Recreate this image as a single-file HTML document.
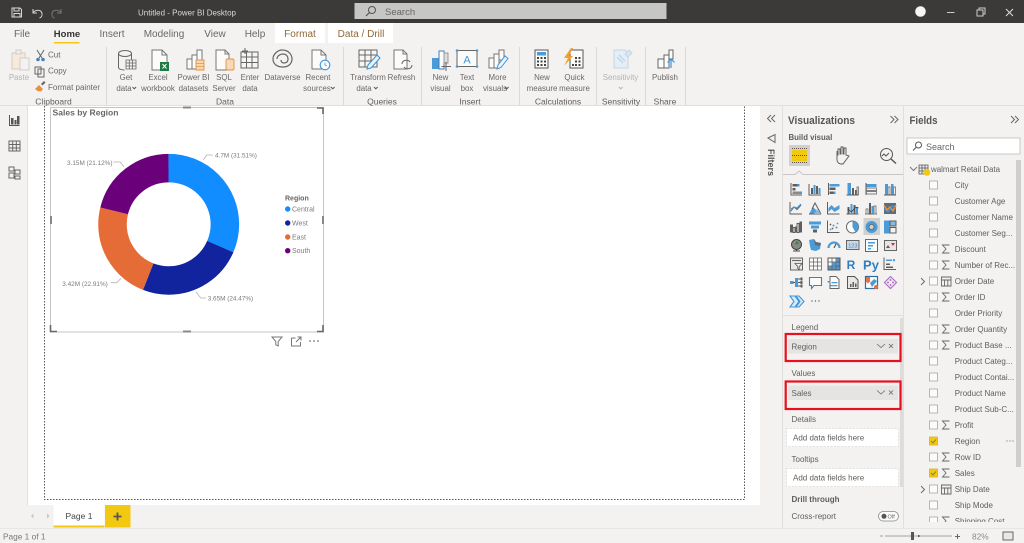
<!DOCTYPE html>
<html><head><meta charset="utf-8"><title>Power BI Desktop</title>
<style>
html,body{margin:0;padding:0;background:#f3f2f1;width:1024px;height:543px;overflow:hidden}
svg{display:block;font-family:"Liberation Sans",sans-serif}
svg.root{filter:blur(.35px)}
text{fill:#605e5c;font-size:8.5px}
.rb text,text.rb{text-anchor:middle;font-size:7.9px;fill:#6a6866}
.gl{text-anchor:middle;font-size:7px;fill:#7a7876}
.tab{text-anchor:middle;font-size:10px;fill:#6a6866}
.f{font-size:8px;fill:#605e5c}
.l{font-size:6.4px;fill:#7d7b79}
.s{fill:none;stroke:#605e5c;stroke-width:1}
.s2{fill:none;stroke:#7f7d7b;stroke-width:.9}
.b{fill:#4a9bd8}
.g{fill:#605e5c}
.cb{fill:#fbfbfa;stroke:#a8a6a4;stroke-width:.8}
.bs{fill:none;stroke:#3f96d8;stroke-width:1.2}
.o{fill:#f6d9b8;stroke:#e8903c;stroke-width:.9}
</style></head><body>
<svg class="root" width="1024" height="543" viewBox="0 0 1024 543" xmlns="http://www.w3.org/2000/svg">
<rect width="1024" height="543" fill="#f3f2f1"/>
<!-- title bar -->
<rect width="1024" height="23" fill="#3b3a39"/>
<g fill="none" stroke="#d8d8d6" stroke-width="1">
<path d="M12 8h8l1.500 1.500v7.500h-9.500z"/><path d="M14 8v3h5V8M14 17v-3.500h6V17"/>
</g>
<path d="M33 9v4h4M33 13c2-3.500 8-4 9 .5 .5 2.500-1 4-2.500 4.500" fill="none" stroke="#d8d8d6"/>
<path d="M61 9v4h-4M61 13c-2-3.500-8-4-9 .5-.5 2.500 1 4 2.500 4.500" fill="none" stroke="#7a7977"/>
<text x="187" y="15.500" text-anchor="middle" style="fill:#d9d9d7;font-size:8.500px" textLength="98" lengthAdjust="spacingAndGlyphs">Untitled - Power BI Desktop</text>
<rect x="354.500" y="3" width="312" height="16" fill="#c6c6c4"/>
<circle cx="372" cy="10" r="3.500" fill="none" stroke="#555" stroke-width="1"/><path d="M369.500 12.500l-3.500 3.500" stroke="#555" stroke-width="1.200"/>
<text x="385" y="15" style="font-size:9.500px;fill:#676664">Search</text>
<circle cx="920.500" cy="11.500" r="5.300" fill="#f5f5f5"/>
<path d="M947 12.500h7.500" stroke="#ccc" stroke-width="1"/>
<path d="M977 10h6v6h-6zM979 10V8h6v6h-2" fill="none" stroke="#ccc" stroke-width="1"/>
<path d="M1006 9l7 7M1013 9l-7 7" stroke="#ddd" stroke-width="1"/>
<!-- tabs -->
<rect x="275" y="23" width="50" height="20" fill="#fff"/>
<rect x="328" y="23" width="65" height="20" fill="#fff"/>
<text class="tab" x="22" y="37">File</text>
<text class="tab" x="67" y="37" style="fill:#333;font-weight:bold;font-size:9.500px">Home</text>
<rect x="54" y="42" width="25.500" height="1.500" fill="#f2c811"/>
<text class="tab" x="112" y="37">Insert</text>
<text class="tab" x="164" y="37">Modeling</text>
<text class="tab" x="215" y="37">View</text>
<text class="tab" x="255" y="37">Help</text>
<text class="tab" x="300" y="37" style="fill:#8f6a38">Format</text>
<text class="tab" x="361" y="37" style="fill:#8f6a38">Data / Drill</text>
<!-- ribbon separators -->
<g stroke="#dcdad8"><path d="M106.500 47v58M343.500 47v58M421.500 47v58M519.500 47v58M596.500 47v58M645.500 47v58M685.500 47v58"/></g>
<rect x="0" y="105" width="1024" height="1" fill="#e1dfdd"/>
<!-- ribbon labels -->
<g class="rb">
<text x="19" y="80" style="fill:#b5b3b1">Paste</text>
<text x="126" y="80">Get</text><text x="124" y="91">data</text>
<text x="158" y="80">Excel</text><text x="158" y="91">workbook</text>
<text x="193.500" y="80">Power BI</text><text x="193.500" y="91">datasets</text>
<text x="224" y="80">SQL</text><text x="224" y="91">Server</text>
<text x="250" y="80">Enter</text><text x="250" y="91">data</text>
<text x="282.500" y="80">Dataverse</text>
<text x="318" y="80">Recent</text><text x="317" y="91">sources</text>
<text x="368" y="80">Transform</text><text x="364" y="91">data</text>
<text x="401.500" y="80">Refresh</text>
<text x="440.500" y="80">New</text><text x="440.500" y="91">visual</text>
<text x="467" y="80">Text</text><text x="467" y="91">box</text>
<text x="497.500" y="80">More</text><text x="495" y="91">visuals</text>
<text x="542" y="80">New</text><text x="542" y="91">measure</text>
<text x="574.500" y="80">Quick</text><text x="574.500" y="91">measure</text>
<text x="620.500" y="80" style="fill:#b5b3b1">Sensitivity</text>
<text x="665" y="80">Publish</text>
</g>
<path d="M132.500 87l1.800 1.800 1.800-1.800M331 87l1.800 1.800 1.800-1.800M374 87l1.800 1.800 1.800-1.800M505 87l1.800 1.800 1.800-1.800" fill="none" stroke="#555"/>
<path d="M619 87l1.800 1.800 1.800-1.800" fill="none" stroke="#b5b3b1"/>
<text x="48" y="57.500" style="font-size:8px;fill:#6a6866">Cut</text>
<text x="48" y="73.500" style="font-size:8px;fill:#6a6866">Copy</text>
<text x="48" y="90" style="font-size:8px;fill:#6a6866" textLength="52" lengthAdjust="spacingAndGlyphs">Format painter</text>
<g class="gl"><text x="53.500" y="104.500">Clipboard</text><text x="225" y="104.500">Data</text><text x="382" y="104.500">Queries</text><text x="470" y="104.500">Insert</text><text x="558" y="104.500">Calculations</text><text x="621" y="104.500">Sensitivity</text><text x="665" y="104.500">Share</text></g>
<!-- clipboard icons -->
<path d="M12 53h13v16H12z" fill="#f7ead9" stroke="#cfcdcb"/><path d="M16 50h5v4h-5z" fill="#eee" stroke="#cfcdcb"/><path d="M20 58h9v12h-9z" fill="#f3f2f1" stroke="#cfcdcb"/>
<path d="M37 50l5 8M44 50l-5 8" stroke="#666" fill="none"/><circle cx="38" cy="59.500" r="1.800" fill="#4a7fc0"/><circle cx="43" cy="59.500" r="1.800" fill="#4a7fc0"/>
<path d="M35 67h6v7h-6zM38 69h6v8h-6z" fill="#f3f2f1" stroke="#666"/>
<path d="M35 89l4-4 4 4-2 2.500-3.500-.5z" fill="#e8903c"/><path d="M41 84l3-3 1.500 1.500-3 3z" fill="#666"/>
<!-- data icons -->
<ellipse cx="125" cy="53.500" rx="6.500" ry="3" fill="#f3f2f1" stroke="#666"/><path d="M118.500 53.500v14c0 1.500 3 2.500 6 2.500M131.500 53.500v6" fill="none" stroke="#666"/>
<path d="M126 60h10v9h-10zM126 63h10M126 66h10M129.300 60v9M132.600 60v9" fill="#f3f2f1" stroke="#666" stroke-width=".8"/>
<path d="M152 50h10l5 5v15h-15z" fill="#fbfbfa" stroke="#777"/><path d="M162 50v5h5" fill="none" stroke="#777"/><rect x="160" y="62" width="9" height="9" fill="#1f7a44"/><path d="M162.500 64l4 4.500M166.500 64l-4 4.500" stroke="#fff"/>
<path d="M187 59h5v10h-5zM192 55h5v14h-5zM197 50h5v10h-5z" fill="#fbfbfa" stroke="#777"/>
<path d="M196 60h8v10h-8z" class="o"/><path d="M196 63.500h8M196 66.500h8" stroke="#e8903c" fill="none" stroke-width=".8"/>
<path d="M216 50h9l4 4v16h-13z" fill="#fbfbfa" stroke="#777"/><path d="M225 50v4h4" fill="none" stroke="#777"/><rect x="226" y="59" width="8" height="11" rx="1.500" class="o"/>
<path d="M241 52h17v16h-17zM241 57h17M241 62.500h17M246.500 52v16M252 52v16" fill="#f5f5f4" stroke="#666"/><path d="M245 48v6M242 51h6" stroke="#666"/>
<path d="M282 50c7 0 10 5 10 9 0 5-4 8-9 8-6 0-10-3-10-8 0-5 5-9 9-9zM277 59c0-3 3-5 6-5 3 0 5 2 5 5 0 3-2 4-4 4-2 0-3-1.500-3-3" fill="none" stroke="#666" stroke-width="1.200"/>
<path d="M312 50h9l5 5v14h-14z" fill="#fbfbfa" stroke="#777"/><path d="M321 50v5h5" fill="none" stroke="#777"/><circle cx="325" cy="65" r="4.800" fill="#fff" stroke="#3f96d8" stroke-width="1.100"/><path d="M325 62.500V65l2 1" fill="none" stroke="#3f96d8" stroke-width=".8"/>
<!-- queries -->
<path d="M359 50h18v17h-18zM359 55h18M359 61h18M365 50v17M371 50v17" fill="#f5f5f4" stroke="#666"/>
<path d="M367 69l1-4 9-10 3 3-9 10z" fill="#e8f2fb" stroke="#3f96d8" stroke-width="1.100"/>
<path d="M394 50h9l4 4v15h-13z" fill="#fbfbfa" stroke="#777"/><path d="M403 50v4h4" fill="none" stroke="#777"/>
<path d="M402 64c0-4 6-5 8-2M412 65c0 4-6 5-8 2" fill="none" stroke="#666"/>
<!-- insert -->
<path d="M432 58h7v11h-7z" fill="#4a9bd8"/><path d="M439 51h5v18h-5z" fill="#fbfbfa" stroke="#3f7fb8"/><path d="M444 53h4v10h-4z" fill="#ddd" stroke="#999"/><path d="M446 62v9M441.500 66.500h9.500" stroke="#666"/>
<path d="M457 50.500h20v16h-20z" fill="#fbfbfa" stroke="#666"/><circle cx="457" cy="50.500" r="1.300" class="b"/><circle cx="477" cy="50.500" r="1.300" class="b"/><circle cx="457" cy="66.500" r="1.300" class="b"/><circle cx="477" cy="66.500" r="1.300" class="b"/>
<text x="467" y="63.500" text-anchor="middle" style="font-size:11px;fill:#3f96d8">A</text>
<path d="M489 58h5v10h-5zM494 54h5v14h-5zM499 50h5v10h-5z" fill="#fbfbfa" stroke="#777"/><path d="M497 69l1-4 7-9 3 2.500-7 9z" fill="#e8f2fb" stroke="#3f96d8"/>
<!-- calc -->
<path d="M535 50h13v18h-13z" fill="#fbfbfa" stroke="#555"/><rect x="537" y="52" width="9" height="3.500" fill="#4a9bd8"/>
<g fill="#444"><rect x="537" y="57" width="2" height="2"/><rect x="540.500" y="57" width="2" height="2"/><rect x="544" y="57" width="2" height="2"/><rect x="537" y="60.500" width="2" height="2"/><rect x="540.500" y="60.500" width="2" height="2"/><rect x="544" y="60.500" width="2" height="2"/><rect x="537" y="64" width="2" height="2"/><rect x="540.500" y="64" width="2" height="2"/><rect x="544" y="64" width="2" height="2"/></g>
<path d="M570 50h13v18h-13z" fill="#fbfbfa" stroke="#555"/>
<g fill="#444"><rect x="575" y="57" width="2" height="2"/><rect x="578.500" y="57" width="2" height="2"/><rect x="575" y="60.500" width="2" height="2"/><rect x="578.500" y="60.500" width="2" height="2"/><rect x="572" y="64" width="2" height="2"/><rect x="575" y="64" width="2" height="2"/><rect x="578.500" y="64" width="2" height="2"/></g>
<path d="M571 48l-7 10h4l-4 8 9-10h-4l4-8z" fill="#f0a030"/>
<!-- sensitivity -->
<path d="M614 50h11l3 3v15h-14z" fill="#e4eef6" stroke="#c3d6e6"/><path d="M617 57l6 6M619 55l6 6" stroke="#b8cfe2"/><path d="M625 54l4-4 3 3-4 4z" fill="#d9e6f0" stroke="#c3d6e6"/>
<!-- publish -->
<path d="M658 59h6v9h-6zM664 55h5v13h-5zM669 50h4v9h-4z" fill="#fbfbfa" stroke="#666"/><path d="M671 68v-9M667.500 62.500l3.500-3.500 3.500 3.500" fill="none" stroke="#3f96d8" stroke-width="1.200"/>
<!-- canvas -->
<rect x="27" y="106" width="733" height="399" fill="#fff"/>
<rect x="27" y="106" width="1" height="399" fill="#e1dfdd"/>
<path d="M44.500 106V499.500H744.500V106" fill="none" stroke="#555" stroke-width="1" stroke-dasharray="1.500 1.500"/>
<!-- left rail icons -->
<path d="M9.500 115v10.500h10" fill="none" stroke="#555"/><path d="M11 118h2.500v6.500H11zM14.500 120h2v4.500h-2zM17 116h2.500v8.500H17z" fill="#555"/>
<path d="M9 141h11v10H9zM9 144.500h11M9 148h11M12.700 141v10M16.300 141v10" fill="none" stroke="#666"/>
<path d="M9 167h5v4H9zM15 170h5v4h-5zM15 176h5v3h-5zM9 173h5v5H9z" fill="none" stroke="#666"/>
<!-- visual -->
<rect x="50.500" y="107.500" width="273" height="224.500" fill="#fff" stroke="#b8b6b4" stroke-width=".8"/>
<text x="52.500" y="115.500" style="font-size:8.500px;font-weight:bold;fill:#666" textLength="66" lengthAdjust="spacingAndGlyphs">Sales by Region</text>
<g fill="none" stroke-width="28.500" transform="rotate(-90 168.700 224.300)">
<circle cx="168.700" cy="224.300" r="56.200" stroke="#118dff" pathLength="100" stroke-dasharray="31.510 68.490"/>
<circle cx="168.700" cy="224.300" r="56.200" stroke="#12239e" pathLength="100" stroke-dasharray="24.470 75.530" stroke-dashoffset="-31.510"/>
<circle cx="168.700" cy="224.300" r="56.200" stroke="#e66c37" pathLength="100" stroke-dasharray="22.910 77.090" stroke-dashoffset="-55.980"/>
<circle cx="168.700" cy="224.300" r="56.200" stroke="#6b007b" pathLength="100" stroke-dasharray="21.110 78.890" stroke-dashoffset="-78.890"/>
</g>
<g fill="none" stroke="#b5b3b1" stroke-width=".8"><path d="M203.300 160l3.400-5h6M113.300 162h6.700l4 4.700M110.700 282.700h6l4.300-4.400M196 291.700l4.700 6.300h5.300"/></g>
<text class="l" x="215" y="157.500">4.7M (31.51%)</text>
<text class="l" x="67" y="165">3.15M (21.12%)</text>
<text class="l" x="62.300" y="286">3.42M (22.91%)</text>
<text class="l" x="207.700" y="300.500">3.65M (24.47%)</text>
<text x="285" y="200.500" style="font-size:7px;font-weight:bold;fill:#666">Region</text>
<circle cx="287.700" cy="209" r="2.700" fill="#118dff"/><text class="l" x="292" y="211.500" style="font-size:7px">Central</text>
<circle cx="287.700" cy="223" r="2.700" fill="#12239e"/><text class="l" x="292" y="225.500" style="font-size:7px">West</text>
<circle cx="287.700" cy="237" r="2.700" fill="#e66c37"/><text class="l" x="292" y="239.500" style="font-size:7px">East</text>
<circle cx="287.700" cy="250.700" r="2.700" fill="#6b007b"/><text class="l" x="292" y="253.200" style="font-size:7px">South</text>
<!-- handles -->
<g fill="none" stroke="#6a6866" stroke-width="1.600"><path d="M317 108h6v6M50.500 325v6.500h6.500M323 325v6.500h-6"/></g>
<g fill="#8a8886"><rect x="183" y="106.500" width="8" height="2"/><rect x="183" y="330.500" width="8" height="2"/><rect x="50" y="216" width="2" height="8"/><rect x="322" y="216" width="2" height="8"/></g>
<path d="M272 337h10l-3.800 4.500v4.500l-2.400-1.200v-3.300z" fill="none" stroke="#777"/>
<path d="M291.500 338h4M291.500 338v8h9v-4M296 342l5-5M297.500 337h3.500v3.500" fill="none" stroke="#777"/>
<g fill="#777"><circle cx="310" cy="341" r=".9"/><circle cx="314" cy="341" r=".9"/><circle cx="318" cy="341" r=".9"/></g>
<!-- page tabs -->
<path d="M33.500 513.500v5l-2.500-2.500zM47 513.500v5l2.500-2.500z" fill="#c8c6c4"/>
<rect x="53.500" y="505" width="51" height="22" fill="#fff"/><rect x="53.500" y="525.500" width="51" height="2" fill="#f2c811"/>
<text x="79" y="519" text-anchor="middle" style="font-size:8.500px;fill:#444">Page 1</text>
<rect x="105" y="505" width="25.500" height="22.500" fill="#f2c811"/>
<path d="M117.500 512.500v8M113.500 516.500h8" stroke="#555" stroke-width="1.800"/>
<rect x="0" y="528" width="1024" height="1" fill="#e8e6e4"/>
<text x="3" y="539.500" style="font-size:8.300px;fill:#7a7876">Page 1 of 1</text>
<!-- zoom -->
<path d="M880 536h3M885 536h67" stroke="#8a8886" stroke-width=".8"/><rect x="911" y="532" width="3" height="8" fill="#555"/><rect x="918" y="535" width="1.500" height="2" fill="#555"/>
<path d="M955 536.500h5M957.500 534v5" stroke="#666"/>
<text x="972" y="539.500" style="font-size:8.300px;fill:#8a8886">82%</text>
<rect x="1003" y="532" width="10" height="8" fill="#e8e8e8" stroke="#666"/>
<!-- filters panel -->
<rect x="760" y="106" width="22" height="422" fill="#f3f2f1"/>
<rect x="782" y="106" width="1" height="422" fill="#e1dfdd"/>
<path d="M771 115l-3.500 3.500 3.500 3.500M775 115l-3.500 3.500 3.500 3.500" fill="none" stroke="#666"/>
<path d="M768 138l7-3.500v8z M775 136.500v3" fill="none" stroke="#666"/>
<text transform="translate(768 149) rotate(90)" style="font-size:9px;font-weight:bold;fill:#555">Filters</text>
<!-- viz panel -->
<text x="788" y="124" style="font-size:11px;font-weight:bold;fill:#555" textLength="67" lengthAdjust="spacingAndGlyphs">Visualizations</text>
<path d="M890.500 116l3.500 3.500-3.500 3.500M894.500 116l3.500 3.500-3.500 3.500" fill="none" stroke="#666"/>
<text x="788.500" y="140" style="font-size:7.800px;font-weight:bold;fill:#605e5c">Build visual</text>
<rect x="789" y="145" width="21" height="21" fill="#d2d0ce"/>
<rect x="792" y="150" width="15" height="11" fill="#f2c811"/><path d="M792 148.500h15M792 155.500h15M792 162.500h15" stroke="#555" stroke-dasharray="1 1"/>
<path d="M837 151v9c0 2 2 4 4 4h2l6-8-3-1v-7h-2v6h-1v-7h-2v7h-1v-5h-2v6h-1z" fill="#f3f2f1" stroke="#555" stroke-width=".9"/>
<circle cx="886.500" cy="154.500" r="6" fill="none" stroke="#555"/><path d="M891 159l5 4.500" stroke="#555" stroke-width="1.500"/><path d="M882 156l2-2 2 2 3-3" fill="none" stroke="#555"/>
<path d="M783 174.500h12l4-3.500 4 3.500h100" fill="none" stroke="#c8c6c4"/>
<rect x="863.500" y="218" width="16.500" height="17" fill="#d2d0ce"/>
<!-- viz icons -->
<g transform="translate(790 183)"><path class="s" d="M1 0v12h11"/><path class="g" d="M2.500 1h5v2.500h-5z"/><path class="b" d="M7.500 1h2v2.500h-2z"/><path class="g" d="M2.500 5h3v2.500h-3z"/><path class="g" d="M2.500 8.500h7V11h-7z" opacity=".7"/><path class="b" d="M9.500 8.500h2.500V11h-2.500z"/></g>
<g transform="translate(809 183)"><path class="s" d="M0 1v11h12"/><path class="g" d="M2 5h2v6H2zM7 3h2v8H7z"/><path class="b" d="M4.500 2h2v9h-2zM9.500 5h2v6h-2z"/></g>
<g transform="translate(827.500 183)"><path class="s" d="M1 0v12"/><path class="b" d="M2 1h10v2.500H2z"/><path class="g" d="M2 4.500h6V7H2z"/><path class="g" d="M2 8.500h4V11H2z"/><path class="b" d="M6 8.500h2V11H6z"/></g>
<g transform="translate(846.500 183)"><path class="s" d="M0 12h12"/><path class="b" d="M1 0h3.500v11.500H1z"/><path class="g" d="M5.500 5h2v6.500h-2zM8.500 7h1.500v4.500H8.500z"/><path class="s2" d="M10.500 4h1.500v7.500h-1.500z"/></g>
<g transform="translate(865 183)"><path class="s" d="M1 0v12"/><path class="b" d="M1.500 1h10v3h-10z"/><path class="s2" d="M1.500 5h10v2.500h-10zM1.500 8.500h10V11h-10z"/></g>
<g transform="translate(884 183)"><path class="s" d="M0 12h12"/><path class="b" d="M1 1h3v10.500H1zM7 1h2.500v10.500H7z"/><path class="s2" d="M4 4h2v7.500H4zM9.500 4h2v7.500h-2z"/></g>
<g transform="translate(790 202)"><path class="s" d="M0 0v12h12"/><path class="s" d="M1 9l3-4 3 2.500 4-4.500"/><path class="bs" d="M1 7l3-2 3 1 4-4" stroke-width=".9"/></g>
<g transform="translate(809 202)"><path class="b" d="M0 12l4-7 3 3 1 4z"/><path class="s" d="M0 12h12M3 7l3-6 6 11"/><path d="M5 12l3-5 4 5z" fill="#7fbbe5"/></g>
<g transform="translate(827.500 202)"><path class="b" d="M1 6l3-3 3 3 5-3v4l-5 3-3-3-3 3z"/><path class="s" d="M0 0v12h12"/></g>
<g transform="translate(846.500 202)"><path class="s" d="M0 12h12"/><path class="g" d="M1 5h2v7H1zM7 3h2v9H7z"/><path class="b" d="M4 2h2v10H4zM9.500 5h2v7h-2z"/><path d="M1 7l4 3 4-5 3 1" stroke="#333" fill="none" stroke-width=".7"/></g>
<g transform="translate(865 202)"><path class="s" d="M0 12h12"/><path class="s2" d="M1 7h2v5H1zM9 4h2v8H9z"/><path class="g" d="M4 1h2v11H4z"/><path class="b" d="M6.500 4h2v8h-2z"/></g>
<g transform="translate(884 202)"><path d="M0 1h12v11H0z" fill="#5d6c7a"/><path d="M0 3l3 5 3-3 3 4 3-6" fill="none" stroke="#e8903c" stroke-width="1.500"/><path d="M0 7l4 3 4-6 4 2" fill="none" stroke="#4a9bd8"/></g>
<g transform="translate(790 220.500)"><path class="g" d="M0 4h3v8H0zM5 6h2v6H5z"/><path class="s" d="M3 7h2v5H3zM7 3h2v9H7z"/><path class="g" d="M9.500 1h2.500v11H9.500z"/></g>
<g transform="translate(809 220.500)"><path class="b" d="M0 1h12v3H0zM2 5h8v3H2z"/><path class="g" d="M4 9h4v3H4z"/></g>
<g transform="translate(827.500 220.500)"><path class="s" d="M0 0v12h12"/><g class="g"><circle cx="3" cy="4" r=".9"/><circle cx="5" cy="8" r=".9"/></g><g class="b"><circle cx="6" cy="5" r="1"/><circle cx="9" cy="7" r="1"/><circle cx="10" cy="3" r=".9"/><circle cx="3" cy="9" r=".9"/></g></g>
<g transform="translate(846 220.500)"><circle cx="6.500" cy="6.500" r="6" fill="#fbfbfa" stroke="#666"/><path class="b" d="M6.500 .5a6 6 0 0 1 3 11.200l-3-5.200z"/></g>
<g transform="translate(865 220.500)"><circle cx="6.500" cy="6.500" r="4.500" fill="none" stroke="#4a9bd8" stroke-width="3"/><circle cx="6.500" cy="6.500" r="2.600" fill="#d2d0ce" stroke="#555" stroke-width=".8"/></g>
<g transform="translate(884 220.500)"><path class="b" d="M0 0h5.500v13H0z"/><path class="s" d="M6 .5h6v5H6zM6 7h6v5.500H6z"/><path d="M6.500 1h5v4h-5z" fill="#7fbbe5"/></g>
<g transform="translate(790 239)"><circle cx="6.500" cy="5.500" r="5" fill="#8a8886" stroke="#444"/><circle cx="7" cy="4" r="1.500" fill="#2f8a4a"/><path d="M3 12h7M6.500 10v2" stroke="#444"/></g>
<g transform="translate(809 239)"><path class="b" d="M0 1l5-1 2 3 5 1-1 6-4 2-5-1-1-4z"/><path class="g" d="M5 0l2 3 5 1-1 3-5-1z" opacity=".75"/></g>
<g transform="translate(827.500 239)"><path d="M1 9a5.500 5.500 0 0 1 11 0" fill="none" stroke="#4a9bd8" stroke-width="2.200"/><path d="M6.500 9l2-4" stroke="#444"/></g>
<g transform="translate(846 239)"><rect x=".5" y="1.500" width="12.500" height="9" fill="#c8d9e8" stroke="#666"/><text x="6.800" y="8.500" text-anchor="middle" style="font-size:5.500px;fill:#4a7fb0">123</text></g>
<g transform="translate(865 239)"><rect x=".5" y=".5" width="12" height="12" fill="#fbfbfa" stroke="#666"/><path class="b" d="M3 3h7v1.500H3zM3 6h5v1.500H3zM3 9h3v1.500H3z"/></g>
<g transform="translate(884 239)"><rect x=".5" y="1.500" width="12" height="10" fill="#e8e6e4" stroke="#666"/><path d="M7 4h4l-2 3z" fill="#c8323c"/><path class="g" d="M2 9l2-3 2 3z"/></g>
<g transform="translate(790 257.500)"><rect x=".5" y=".5" width="12" height="12" fill="#e8e6e4" stroke="#666"/><path d="M2 3h9" stroke="#666"/><path d="M5 6h7l-2.800 3v3l-1.400-.8V9z" fill="#f3f2f1" stroke="#555" stroke-width=".8"/></g>
<g transform="translate(809 257.500)"><path d="M.5 .5h12v12H.5zM.5 4.500h12M.5 8.500h12M4.500 .5v12M8.500 .5v12" fill="#fbfbfa" stroke="#666" stroke-width=".8"/></g>
<g transform="translate(827.500 257.500)"><path d="M.5 .5h12v12H.5z" fill="#fbfbfa" stroke="#555"/><path class="b" d="M5 5h3.500v3H5zM9 1h3v11H9zM1 9h8v3H1z"/><path d="M.5 4.500h12M.5 8.500h12M4.500 .5v12M8.500 .5v12" stroke="#555" stroke-width=".7"/></g>
<text x="851" y="269" text-anchor="middle" style="font-size:12px;font-weight:bold;fill:#2f7ec2">R</text>
<text x="871" y="269.500" text-anchor="middle" style="font-size:13px;font-weight:bold;fill:#2f7ec2">Py</text>
<g transform="translate(884 257.500)"><path class="s" d="M0 0v12h12"/><path class="b" d="M2 2h6v1.500H2z"/><circle cx="10" cy="2.700" r="1.200" class="b"/><path class="g" d="M2 6h4v1.500H2zM2 9h7v1.500H2z"/></g>
<g transform="translate(790 276)"><path class="b" d="M0 5h3.500v3H0zM5 2h3v9H5z"/><path d="M3 6.500h2M8 3h3M8 6.500h3M8 10h3" stroke="#555"/><path class="g" d="M10.500 1.500h2v3h-2zM10.500 5h2v3h-2zM10.500 8.500h2v3h-2z"/></g>
<g transform="translate(809 276)"><path d="M.5 1.500h12v8H5l-2.500 3v-3h-2z" fill="#fbfbfa" stroke="#3f80b8" stroke-width="1.100"/></g>
<g transform="translate(827.500 276)"><path d="M2.500 .5h6l3 3v9h-9z" fill="#fbfbfa" stroke="#666"/><path class="b" d="M0 5h3v1.500H0zM4 6h6v1.200H4zM3 9h7v1.200H3z"/></g>
<g transform="translate(846.500 276)"><path d="M1 .5h7l3.500 3.500v8.500H1z" fill="#e8e6e4" stroke="#555"/><path class="g" d="M3.500 8h1.500v3H3.500zM6 6h1.500v5H6zM8.500 7.500h1.500V11H8.500z"/></g>
<g transform="translate(865 276)"><rect x=".5" y=".5" width="12" height="12" fill="#fbfbfa" stroke="#2f6ea5" stroke-width="1.200"/><path d="M1 1h4v4.500l-2 2-2-2z" fill="#e8703c"/><path class="b" d="M5 7l4-4 3 2-5 6z"/><circle cx="11" cy="11" r="2" fill="#e8703c"/></g>
<g transform="translate(884 276)"><path d="M6.500 .5l6 6-6 6-6-6z" fill="#f3edf5" stroke="#b070c0" stroke-width="1.200"/><circle cx="6.500" cy="4" r="1" fill="#b070c0"/><circle cx="4" cy="6.500" r="1" fill="#b070c0"/><circle cx="9" cy="6.500" r="1" fill="#b070c0"/><circle cx="6.500" cy="9" r="1" fill="#b070c0"/></g>
<path d="M790 296h5l4 5.500-4 5.500h-5l4-5.500zM796 296h3l5 5.500-5 5.500h-3l4-5.500z" fill="#d9ebf8" stroke="#3f96d8" stroke-width="1.100"/>
<g fill="#666"><circle cx="812" cy="301" r=".7"/><circle cx="815.500" cy="301" r=".7"/><circle cx="819" cy="301" r=".7"/></g>
<!-- viz wells -->
<rect x="783" y="315" width="120" height="1" fill="#e1dfdd"/>
<rect x="900" y="318" width="3" height="169" fill="#dedcda"/>
<text x="791.500" y="330" class="f">Legend</text>
<rect x="788" y="339" width="110" height="14.500" fill="#e6e4e2"/>
<text x="791.500" y="349.500" class="f">Region</text>
<path d="M877 344l4 3.500 4-3.500M889 344l4 4M893 344l-4 4" fill="none" stroke="#666" stroke-width=".8"/>
<rect x="785.700" y="334" width="114.800" height="27" fill="none" stroke="#e8101e" stroke-width="2.200"/>
<text x="791.500" y="376" class="f">Values</text>
<rect x="788" y="385.500" width="110" height="14.500" fill="#e6e4e2"/>
<text x="791.500" y="396" class="f">Sales</text>
<path d="M877 390.500l4 3.500 4-3.500M889 390.500l4 4M893 390.500l-4 4" fill="none" stroke="#666" stroke-width=".8"/>
<rect x="785.700" y="381.500" width="114.800" height="27.500" fill="none" stroke="#e8101e" stroke-width="2.200"/>
<text x="791.500" y="422" class="f">Details</text>
<rect x="786.500" y="428.500" width="112" height="18" fill="#fff" stroke="#dcdad8" stroke-width=".8" stroke-dasharray="2 1.500"/>
<text x="793" y="440.500" class="f">Add data fields here</text>
<text x="791.500" y="462" class="f">Tooltips</text>
<rect x="786.500" y="468.500" width="112" height="18" fill="#fff" stroke="#dcdad8" stroke-width=".8" stroke-dasharray="2 1.500"/>
<text x="793" y="480.500" class="f">Add data fields here</text>
<text x="791.500" y="502" style="font-size:8px;font-weight:bold;fill:#605e5c">Drill through</text>
<text x="791.500" y="519" class="f">Cross-report</text>
<rect x="878.500" y="511.500" width="20" height="9.500" rx="4.700" fill="#fbfbfa" stroke="#8a8886" stroke-width=".8"/><circle cx="884" cy="516.300" r="2.500" fill="#555"/><text x="887.500" y="518.500" style="font-size:5.500px;fill:#666">Off</text>
<!-- fields panel -->
<rect x="903" y="106" width="1" height="422" fill="#e1dfdd"/>
<text x="909.500" y="124" style="font-size:11px;font-weight:bold;fill:#555" textLength="28" lengthAdjust="spacingAndGlyphs">Fields</text>
<path d="M1011 116l3.500 3.500-3.500 3.500M1015 116l3.500 3.500-3.500 3.500" fill="none" stroke="#666"/>
<rect x="907" y="138" width="113" height="16" fill="#fff" stroke="#bdbbb9" stroke-width=".8"/>
<circle cx="918.500" cy="145" r="3" fill="none" stroke="#555"/><path d="M916 147.500l-3 3" stroke="#555" stroke-width="1.100"/>
<text x="926" y="150" style="font-size:9px;fill:#666">Search</text>
<rect x="1016" y="160" width="5" height="307" fill="#d0cecc"/>
<path d="M910 167l3.500 3.500 3.500-3.500" fill="none" stroke="#777"/>
<path d="M919 165h9v9h-9zM919 168h9M919 171h9M922 165v9M925 165v9" fill="#eee" stroke="#555" stroke-width=".8"/>
<circle cx="927" cy="172.500" r="3.300" fill="#f2c811"/>
<text x="931" y="172" class="f" textLength="69" lengthAdjust="spacingAndGlyphs">walmart Retail Data</text>
<svg x="904" y="176" width="116" height="346" viewBox="904 176 116 346">
<g class="cb">
<rect x="929.500" y="181" width="8" height="8"/><rect x="929.500" y="197" width="8" height="8"/><rect x="929.500" y="213" width="8" height="8"/><rect x="929.500" y="229" width="8" height="8"/><rect x="929.500" y="245" width="8" height="8"/><rect x="929.500" y="261" width="8" height="8"/><rect x="929.500" y="277" width="8" height="8"/><rect x="929.500" y="293" width="8" height="8"/><rect x="929.500" y="309" width="8" height="8"/><rect x="929.500" y="325" width="8" height="8"/><rect x="929.500" y="341" width="8" height="8"/><rect x="929.500" y="357" width="8" height="8"/><rect x="929.500" y="373" width="8" height="8"/><rect x="929.500" y="389" width="8" height="8"/><rect x="929.500" y="405" width="8" height="8"/><rect x="929.500" y="453" width="8" height="8"/><rect x="929.500" y="421" width="8" height="8"/><rect x="929.500" y="485" width="8" height="8"/><rect x="929.500" y="501" width="8" height="8"/><rect x="929.500" y="517" width="8" height="8"/>
</g>
<g fill="#f2c811" stroke="#d8b030" stroke-width=".8"><rect x="929.500" y="437" width="8" height="8"/><rect x="929.500" y="469" width="8" height="8"/></g>
<path d="M931 441l2 2 3-3.500M931 473l2 2 3-3.500" fill="none" stroke="#8a7020" stroke-width=".9"/>
<text x="954.700" y="188" class="f">City</text>
<text x="954.700" y="204" class="f">Customer Age</text>
<text x="954.700" y="220" class="f">Customer Name</text>
<text x="954.700" y="236" class="f">Customer Seg...</text>
<text x="954.700" y="252" class="f">Discount</text>
<text x="954.700" y="268" class="f">Number of Rec...</text>
<text x="954.700" y="284" class="f">Order Date</text>
<text x="954.700" y="300" class="f">Order ID</text>
<text x="954.700" y="316" class="f">Order Priority</text>
<text x="954.700" y="332" class="f">Order Quantity</text>
<text x="954.700" y="348" class="f">Product Base ...</text>
<text x="954.700" y="364" class="f">Product Categ...</text>
<text x="954.700" y="380" class="f">Product Contai...</text>
<text x="954.700" y="396" class="f">Product Name</text>
<text x="954.700" y="412" class="f">Product Sub-C...</text>
<text x="954.700" y="428" class="f">Profit</text>
<text x="954.700" y="444" class="f">Region</text>
<text x="954.700" y="460" class="f">Row ID</text>
<text x="954.700" y="476" class="f">Sales</text>
<text x="954.700" y="492" class="f">Ship Date</text>
<text x="954.700" y="508" class="f">Ship Mode</text>
<text x="954.700" y="524" class="f">Shipping Cost</text>
<g fill="none" stroke="#666" stroke-width=".9">
<path d="M949.500 245h-7l3.500 4-3.500 4h7"/><path d="M949.500 261h-7l3.500 4-3.500 4h7"/><path d="M949.500 293h-7l3.500 4-3.500 4h7"/><path d="M949.500 325h-7l3.500 4-3.500 4h7"/><path d="M949.500 341h-7l3.500 4-3.500 4h7"/><path d="M949.500 421h-7l3.500 4-3.500 4h7"/><path d="M949.500 453h-7l3.500 4-3.500 4h7"/><path d="M949.500 469h-7l3.500 4-3.500 4h7"/><path d="M949.500 517h-7l3.500 4-3.500 4h7"/>
<path d="M941.500 277h9.500v9h-9.500zM941.500 280h9.500M944.500 280v6M947.800 280v6"/><path d="M941.500 485h9.500v9h-9.500zM941.500 488h9.500M944.500 488v6M947.800 488v6"/>
<path d="M921 278l3.500 3.500-3.500 3.500M921 486l3.500 3.500-3.500 3.500"/>
</g>
<g fill="#999"><circle cx="1007" cy="441" r=".7"/><circle cx="1010" cy="441" r=".7"/><circle cx="1013" cy="441" r=".7"/></g>
</svg>
</svg>
</body></html>
